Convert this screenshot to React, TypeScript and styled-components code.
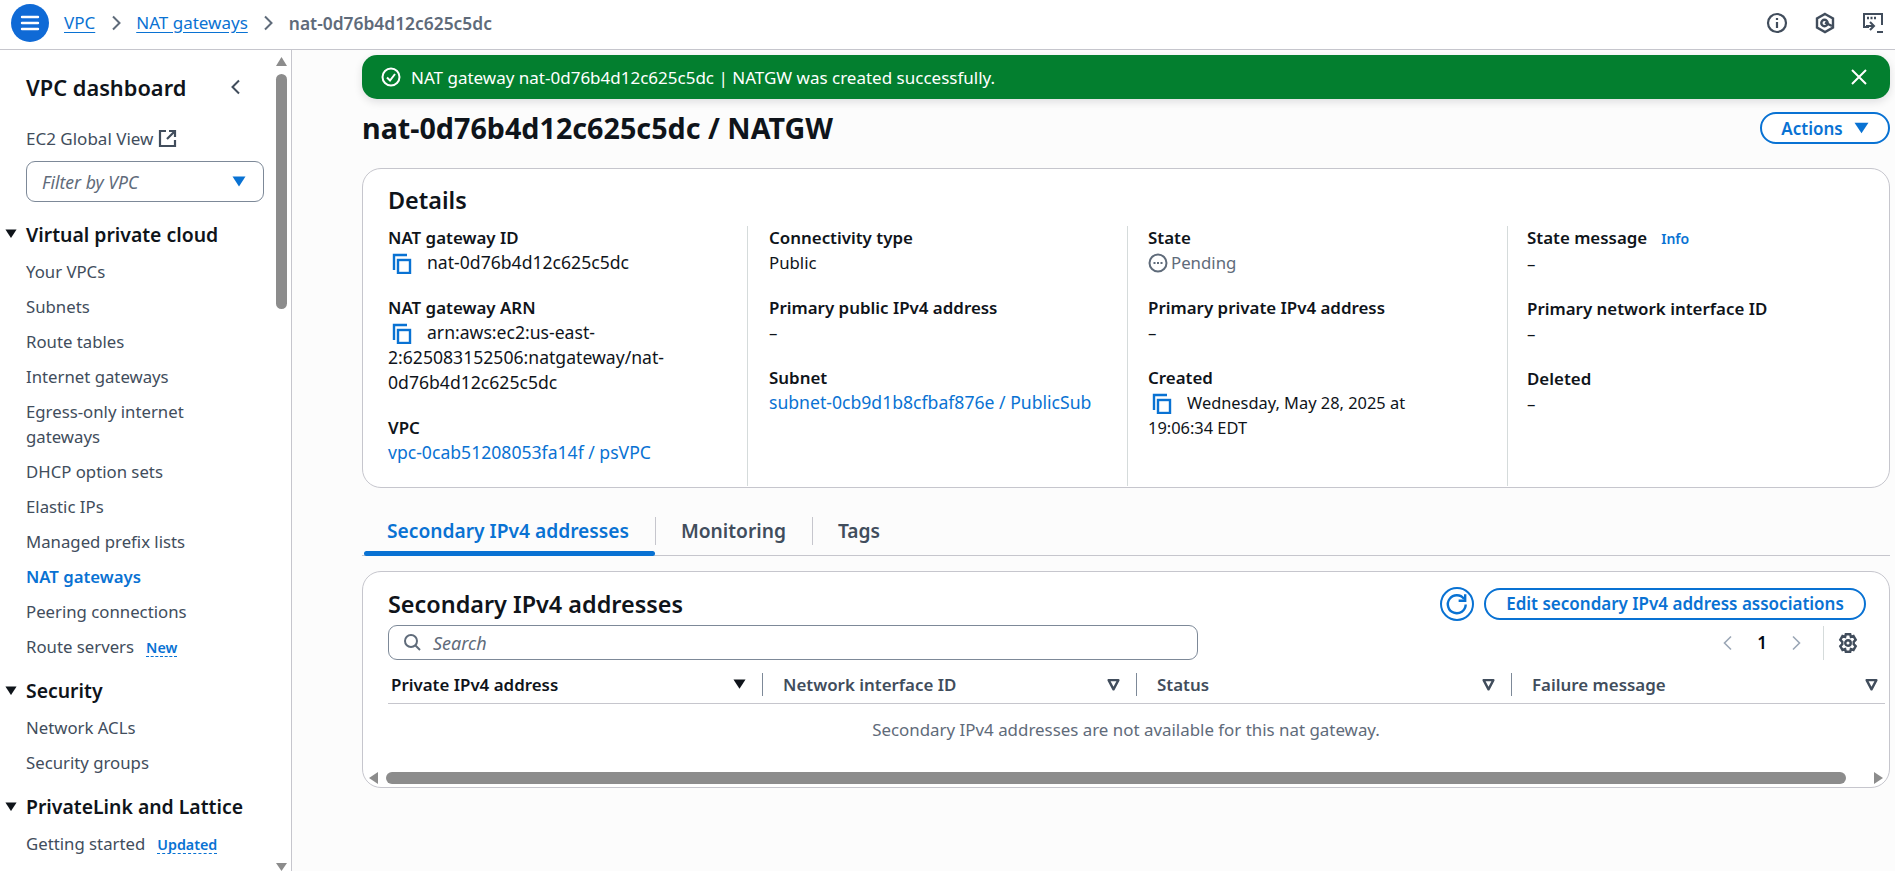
import React from "react";
import styled, { createGlobalStyle } from "styled-components";

const Global = createGlobalStyle`
  html, body { margin: 0; padding: 0; height: 100%; overflow: hidden; background: #fcfcfc; }
  body { font-family: "Noto Sans", "Liberation Sans", sans-serif; font-size: 16px; color: #000716; }
  * { box-sizing: border-box; }
`;

const Page = styled.div`
  width: 1895px; height: 871px; display: flex; flex-direction: column; overflow: hidden;
`;
const TopBar = styled.header`
  height: 50px; flex: none; background: #fff; border-bottom: 1px solid #c6c6cd;
  display: flex; align-items: center; padding: 0 11px 4px 11px;
`;
const MenuButton = styled.div`
  width: 38px; height: 38px; border-radius: 50%; background: #0f6ad6; display: flex;
  align-items: center; justify-content: center; margin-right: 15px; flex: none;
`;
const CrumbLink = styled.a`
  color: #0972d3; text-decoration: underline; text-underline-offset: 3px; font-size: 17px; line-height: 22px;
`;
const CrumbCurrent = styled.span`
  color: #5f6b7a; font-size: 17.4px; font-weight: 600; line-height: 22px;
`;
const CrumbSep = styled.span`
  display: flex; margin: 0 12.5px; color: #5f6b7a;
`;
const TopIcons = styled.div`
  margin-left: auto; display: flex; align-items: center; gap: 26px; color: #414d5c;
`;
const Body = styled.div`
  flex: 1; display: flex; min-height: 0;
`;
const Side = styled.aside`
  width: 292px; flex: none; background: #fff; border-right: 1px solid #c6c6cd; position: relative;
  overflow: hidden; padding: 21px 0 0 0;
`;
const SideHead = styled.div`
  display: flex; align-items: center; justify-content: space-between; padding: 0 47px 0 26px; height: 32px;
  font-size: 21.8px; font-weight: 600; color: #0f141a;
`;
const SideRow = styled.div`
  padding-left: 26px; margin-top: 23px; color: #414d5c; font-size: 17px; line-height: 25px;
  display: flex; align-items: center; gap: 5px;
`;
const FilterBox = styled.div`
  margin: 10px 27px 0 26px; height: 41px; border: 1px solid #7d8998; border-radius: 9px;
  display: flex; align-items: center; justify-content: space-between; padding: 0 17px 0 15px;
  font-style: italic; color: #5f6b7a; font-size: 17.6px;
`;
const Section = styled.div<{ $top: number; $h?: number }>`
  display: flex; align-items: center; font-weight: 600; font-size: 19.4px; color: #0f141a; height: ${(p) => p.$h ?? 30}px;
  margin-top: ${(p) => p.$top}px; padding-left: 5px; gap: 9px;
`;
const NavItem = styled.div<{ $active?: boolean }>`
  padding-left: 26px; width: 250px; margin-top: 10px; line-height: 25px; font-size: 16.75px;
  color: ${(p) => (p.$active ? "#0972d3" : "#414d5c")}; font-weight: ${(p) => (p.$active ? 600 : 400)};
`;
const Badge = styled.span`
  color: #0972d3; font-size: 14.3px; font-weight: 600; margin-left: 12px; border-bottom: 1px dashed #0972d3; line-height: 17px; display: inline-block;
`;
const VBar = styled.div`
  position: absolute; right: 4px; top: 0; bottom: 0; width: 11px; display: flex; flex-direction: column; align-items: center;
`;
const VArrowUp = styled.svg`
  margin-top: 7px; flex: none;
`;
const VThumb = styled.div`
  width: 11px; height: 235px; background: #8c8c8c; border-radius: 6px; margin-top: 8px;
`;
const VSpacer = styled.div`flex: 1;`;
const Main = styled.main`
  flex: 1; min-width: 0; padding: 5px 5px 0 70px;
`;
const Banner = styled.div`
  height: 44px; background: #037f2f; border-radius: 15px; color: #fff; display: flex; align-items: center;
  padding: 0 22px 0 19px; gap: 10px; font-size: 17px; box-shadow: 0 3px 8px rgba(0,7,22,.12);
`;
const BannerClose = styled.span`
  margin-left: auto; display: flex;
`;
const TitleRow = styled.div`
  display: flex; align-items: center; justify-content: space-between; margin-top: 13px; height: 32px;
`;
const Title = styled.h1`
  margin: 0; font-size: 28.7px; font-weight: 700; color: #0f141a; line-height: 32px;
`;
const PrimaryOutline = styled.div`
  height: 32px; border: 2px solid #0972d3; border-radius: 16px; color: #0972d3; font-weight: 600; font-size: 17px;
  display: flex; align-items: center; justify-content: center; gap: 11px; background: #fff;
`;
const ActionsButton = styled(PrimaryOutline)`width: 130px;`;
const EditButton = styled(PrimaryOutline)`width: 382px;`;
const Card = styled.section`
  background: #fff; border: 1px solid #c6c6cd; border-radius: 19px;
`;
const DetailsCard = styled(Card)`
  margin-top: 24px; height: 320px; padding: 17px 0 0 25px;
`;
const CardTitle = styled.h2`
  margin: 0; font-size: 23.4px; font-weight: 600; line-height: 28px; color: #0f141a;
`;
const DetailGrid = styled.div`
  display: grid; grid-template-columns: 359px 380px 380px 1fr; margin-top: 12px; height: 241px;
`;
const DetailCol = styled.div<{ $pad?: number; $padRight?: number }>`
  padding: 0 ${(p) => p.$padRight ?? 15}px 0 ${(p) => p.$pad ?? 21}px; border-left: 1px solid #d5dbdb;
  &:first-child { padding-left: 0; border-left: 0; padding-right: 30px; }
`;
const Field = styled.div`
  margin-bottom: 21px;
`;
const Label = styled.div`
  font-weight: 600; color: #0f141a; line-height: 24px; font-size: 16.9px;
`;
const Value = styled.div`
  line-height: 25px; color: #0f141a; font-size: 16.8px;
`;
const IdValue = styled(Value)`font-size: 17.6px;`;
const DateValue = styled(Value)`font-size: 16.4px;`;
const LinkText = styled.a`color: #0972d3;`;
const InfoLink = styled.span`color: #0972d3; font-weight: 600; font-size: 14px; margin-left: 14px;`;
const Copy = styled.span`
  display: inline-flex; vertical-align: -5px; margin: 0 15px 0 4px;
`;
const PendingRow = styled.div`
  display: flex; align-items: center; gap: 3px; color: #5f6b7a; line-height: 25px; font-size: 16.8px;
`;
const Tabs = styled.div`
  margin-top: 26px; height: 42px; display: flex; align-items: center; border-bottom: 1px solid #c6c6cd; position: relative; padding-bottom: 8px;
`;
const Tab = styled.div<{ $active?: boolean }>`
  height: 28px; display: flex; align-items: center; padding: 0 26px 0 25px; font-weight: 600; font-size: 19.2px;
  color: ${(p) => (p.$active ? "#0972d3" : "#414d5c")};
  & + & { border-left: 1px solid #c6c6cd; }
`;
const TabLine = styled.div`
  position: absolute; left: 2px; bottom: -1px; width: 291px; height: 5px; border-radius: 3px; background: #0972d3;
`;
const TableCard = styled(Card)`
  margin-top: 15px; height: 217px; display: flex; flex-direction: column; overflow: hidden;
`;
const TableHead = styled.div`
  display: flex; align-items: center; justify-content: space-between; padding: 11px 23px 0 25px; height: 52px; flex: none;
`;
const Refresh = styled.div`
  width: 34px; height: 34px; border: 2px solid #0972d3; border-radius: 50%; display: flex; align-items: center; justify-content: center; margin-right: 10px;
`;
const HeadActions = styled.div`display: flex; align-items: center;`;
const FilterRow = styled.div`
  display: flex; align-items: center; justify-content: space-between; padding: 1px 30px 0 25px; height: 36px; flex: none;
`;
const SearchBox = styled.div`
  width: 810px; height: 35px; border: 1px solid #7d8998; border-radius: 9px; display: flex; align-items: center;
  padding-left: 14px; gap: 11px; font-style: italic; color: #5f6b7a; font-size: 18px;
`;
const Pager = styled.div`
  display: flex; align-items: center; color: #000716; font-weight: 600; font-size: 17px; gap: 21px;
`;
const PagerDivider = styled.span`
  width: 1px; height: 34px; background: #d5dbdb; margin: 0 -8px 0 -2px;
`;
const HeaderRow = styled.div`
  display: grid; grid-template-columns: 375px 374px 375px 1fr; margin: 5px 4px 0 25px; height: 39px; border-bottom: 1px solid #c6c6cd; align-items: center; flex: none;
`;
const HeadCell = styled.div<{ $sorted?: boolean; $first?: boolean; $last?: boolean }>`
  display: flex; align-items: center; justify-content: space-between; height: 23px;
  padding: 0 ${(p) => (p.$last ? 7 : 16)}px 0 ${(p) => (p.$first ? 3 : 20)}px;
  font-weight: 600; font-size: 16.9px; color: ${(p) => (p.$sorted ? "#0f141a" : "#414d5c")};
  border-right: ${(p) => (p.$last ? "0" : "1px solid #7d8998")};
`;
const EmptyMsg = styled.div`
  text-align: center; color: #5f6b7a; font-size: 16.9px; height: 67px; padding-top: 13px; line-height: 25px; flex: none;
`;
const HScroll = styled.div`
  height: 14px; display: flex; align-items: center; padding: 0 6px; gap: 8px; flex: none;
`;
const HThumb = styled.div`
  flex: none; width: 1460px; height: 12px; background: #8c8c8c; border-radius: 6px; margin-right: auto;
`;

const Tri = ({ color = "#0972d3", size = 14 }: { color?: string; size?: number }) => (
  <svg width={size} height={size * 0.8} viewBox="0 0 14 11"><path d="M0.5 0.5h13L7 10.5z" fill={color} /></svg>
);
const SortIcon = () => (
  <svg width="13" height="13" viewBox="0 0 12 12"><path d="M1.5 2h9L6 10.5z" fill="none" stroke="#414d5c" strokeWidth="2.2" strokeLinejoin="round" /></svg>
);
const CopyIcon = () => (
  <svg width="20" height="21" viewBox="0 0 20 21" fill="none" stroke="#0972d3" strokeWidth="2.4">
    <path d="M2 17V2h13" /><rect x="6" y="7" width="12" height="13" />
  </svg>
);
const Chevron = ({ dir = "right", color = "#5f6b7a", size = 16, w = 2 }: { dir?: "left" | "right"; color?: string; size?: number; w?: number }) => (
  <svg width={size} height={size} viewBox="0 0 16 16" fill="none" stroke={color} strokeWidth={w}>
    <path d={dir === "right" ? "M5 1.5 11.5 8 5 14.5" : "M11 1.5 4.5 8 11 14.5"} />
  </svg>
);

const navTop = ["Your VPCs", "Subnets", "Route tables", "Internet gateways"];
const navBottom = ["DHCP option sets", "Elastic IPs", "Managed prefix lists"];

export default function App() {
  return (
    <Page>
      <Global />
      <TopBar>
        <MenuButton>
          <svg width="20" height="18" viewBox="0 0 20 18" stroke="#fff" strokeWidth="2.4" strokeLinecap="round"><path d="M2 3h16M2 9h16M2 15h16" /></svg>
        </MenuButton>
        <CrumbLink>VPC</CrumbLink>
        <CrumbSep><Chevron /></CrumbSep>
        <CrumbLink>NAT gateways</CrumbLink>
        <CrumbSep><Chevron /></CrumbSep>
        <CrumbCurrent>nat-0d76b4d12c625c5dc</CrumbCurrent>
        <TopIcons>
          <svg width="22" height="22" viewBox="0 0 22 22" fill="none" stroke="#414d5c" strokeWidth="2.2"><circle cx="11" cy="11" r="9" /><path d="M11 10v6M11 6v2" /></svg>
          <svg width="22" height="22" viewBox="0 0 22 22" fill="none" stroke="#414d5c" strokeWidth="2.4"><path d="M11 2l8 4.5v9L11 20l-8-4.5v-9z" /><circle cx="10.5" cy="11" r="3.2" /><path d="M11 10.5 18 14" /></svg>
          <svg width="22" height="22" viewBox="0 0 22 22" fill="none" stroke="#414d5c" strokeWidth="2"><path d="M7 15H2V2h18v11" /><path d="M5 6h10" strokeWidth="2.4" strokeDasharray="2 1.5" /><path d="M8 10l4 4-4 4M4 14h8M15 20h6" /></svg>
        </TopIcons>
      </TopBar>
      <Body>
        <Side>
          <SideHead>VPC dashboard <Chevron dir="left" color="#414d5c" /></SideHead>
          <SideRow>
            EC2 Global View
            <svg width="19" height="19" viewBox="0 0 19 19" fill="none" stroke="#414d5c" strokeWidth="2.2"><path d="M8 2H2v15h15v-6M11 2h6v6M17 2 9 10" /></svg>
          </SideRow>
          <FilterBox>Filter by VPC <Tri /></FilterBox>
          <Section $top={17}><Tri color="#0f141a" size={12} />Virtual private cloud</Section>
          {navTop.map((t) => <NavItem key={t}>{t}</NavItem>)}
          <NavItem>Egress-only internet gateways</NavItem>
          {navBottom.map((t) => <NavItem key={t}>{t}</NavItem>)}
          <NavItem $active>NAT gateways</NavItem>
          <NavItem>Peering connections</NavItem>
          <NavItem>Route servers<Badge>New</Badge></NavItem>
          <Section $top={17} $h={29}><Tri color="#0f141a" size={12} />Security</Section>
          <NavItem>Network ACLs</NavItem>
          <NavItem>Security groups</NavItem>
          <Section $top={17} $h={29}><Tri color="#0f141a" size={12} />PrivateLink and Lattice</Section>
          <NavItem>Getting started<Badge>Updated</Badge></NavItem>
          <NavItem>Endpoints</NavItem>
          <VBar>
            <VArrowUp width="11" height="9" viewBox="0 0 11 9"><path d="M5.5 0 11 9H0z" fill="#8c8c8c" /></VArrowUp>
            <VThumb />
            <VSpacer />
            <svg width="11" height="8" viewBox="0 0 11 8"><path d="M0 0h11L5.5 8z" fill="#8c8c8c" /></svg>
          </VBar>
        </Side>
        <Main>
          <Banner>
            <svg width="20" height="20" viewBox="0 0 20 20" fill="none" stroke="#fff" strokeWidth="2"><circle cx="10" cy="10" r="8.5" /><path d="M6 10.5l3 3 5-6.5" /></svg>
            NAT gateway nat-0d76b4d12c625c5dc | NATGW was created successfully.
            <BannerClose><svg width="18" height="18" viewBox="0 0 18 18" stroke="#fff" strokeWidth="2"><path d="M2 2l14 14M16 2 2 16" /></svg></BannerClose>
          </Banner>
          <TitleRow>
            <Title>nat-0d76b4d12c625c5dc / NATGW</Title>
            <ActionsButton>Actions <Tri size={15} /></ActionsButton>
          </TitleRow>
          <DetailsCard>
            <CardTitle>Details</CardTitle>
            <DetailGrid>
              <DetailCol>
                <Field><Label>NAT gateway ID</Label><IdValue><Copy><CopyIcon /></Copy>nat-0d76b4d12c625c5dc</IdValue></Field>
                <Field><Label>NAT gateway ARN</Label><IdValue><Copy><CopyIcon /></Copy>arn:aws:ec2:us-east-2:625083152506:natgateway/nat-0d76b4d12c625c5dc</IdValue></Field>
                <Field><Label>VPC</Label><IdValue><LinkText>vpc-0cab51208053fa14f / psVPC</LinkText></IdValue></Field>
              </DetailCol>
              <DetailCol>
                <Field><Label>Connectivity type</Label><Value>Public</Value></Field>
                <Field><Label>Primary public IPv4 address</Label><Value>–</Value></Field>
                <Field><Label>Subnet</Label><IdValue><LinkText>subnet-0cb9d1b8cfbaf876e / PublicSub</LinkText></IdValue></Field>
              </DetailCol>
              <DetailCol $pad={20} $padRight={65}>
                <Field><Label>State</Label><PendingRow>
                  <svg width="20" height="20" viewBox="0 0 20 20" fill="none" stroke="#5f6b7a" strokeWidth="2"><circle cx="10" cy="10" r="8.5" /><path d="M5.5 10h2M9 10h2M12.5 10h2" /></svg>
                  Pending</PendingRow></Field>
                <Field><Label>Primary private IPv4 address</Label><Value>–</Value></Field>
                <Field><Label>Created</Label><DateValue><Copy><CopyIcon /></Copy>Wednesday, May 28, 2025 at 19:06:34 EDT</DateValue></Field>
              </DetailCol>
              <DetailCol $pad={19}>
                <Field><Label>State message<InfoLink>Info</InfoLink></Label><Value>–</Value></Field>
                <Field><Label>Primary network interface ID</Label><Value>–</Value></Field>
                <Field><Label>Deleted</Label><Value>–</Value></Field>
              </DetailCol>
            </DetailGrid>
          </DetailsCard>
          <Tabs>
            <Tab $active>Secondary IPv4 addresses</Tab>
            <Tab>Monitoring</Tab>
            <Tab>Tags</Tab>
            <TabLine />
          </Tabs>
          <TableCard>
            <TableHead>
              <CardTitle>Secondary IPv4 addresses</CardTitle>
              <HeadActions>
                <Refresh>
                  <svg width="24" height="24" viewBox="0 0 22 22" fill="none" stroke="#0972d3" strokeWidth="2.2"><path d="M17.5 6.5a8.2 8.2 0 1 0 1.5 5" /><path d="M18.5 2v6h-6" /></svg>
                </Refresh>
                <EditButton>Edit secondary IPv4 address associations</EditButton>
              </HeadActions>
            </TableHead>
            <FilterRow>
              <SearchBox>
                <svg width="19" height="19" viewBox="0 0 19 19" fill="none" stroke="#5f6b7a" strokeWidth="2"><circle cx="8" cy="8" r="6" /><path d="M12.5 12.5 17 17" /></svg>
                Search
              </SearchBox>
              <Pager>
                <Chevron dir="left" color="#9ba7b6" size={16} w={1.6} />
                1
                <Chevron color="#9ba7b6" size={16} w={1.6} />
                <PagerDivider />
                <svg width="22" height="22" viewBox="0 0 20 20" fill="none" stroke="#414d5c" strokeWidth="2.2"><path d="M8 2h4l.6 2.5 2.4-.8 2 3.4-1.8 1.8v2.2l1.8 1.8-2 3.4-2.4-.8L12 18H8l-.6-2.5-2.4.8-2-3.4 1.8-1.8V8.9L3 7.1l2-3.4 2.4.8z" /><circle cx="10" cy="10" r="2.5" /></svg>
              </Pager>
            </FilterRow>
            <HeaderRow>
              <HeadCell $sorted $first>Private IPv4 address <Tri color="#0f141a" size={13} /></HeadCell>
              <HeadCell>Network interface ID <SortIcon /></HeadCell>
              <HeadCell>Status <SortIcon /></HeadCell>
              <HeadCell $last>Failure message <SortIcon /></HeadCell>
            </HeaderRow>
            <EmptyMsg>Secondary IPv4 addresses are not available for this nat gateway.</EmptyMsg>
            <HScroll>
              <svg width="9" height="12" viewBox="0 0 9 12"><path d="M9 0v12L0 6z" fill="#8c8c8c" /></svg>
              <HThumb />
              <svg width="9" height="12" viewBox="0 0 9 12"><path d="M0 0v12l9-6z" fill="#8c8c8c" /></svg>
            </HScroll>
          </TableCard>
        </Main>
      </Body>
    </Page>
  );
}
